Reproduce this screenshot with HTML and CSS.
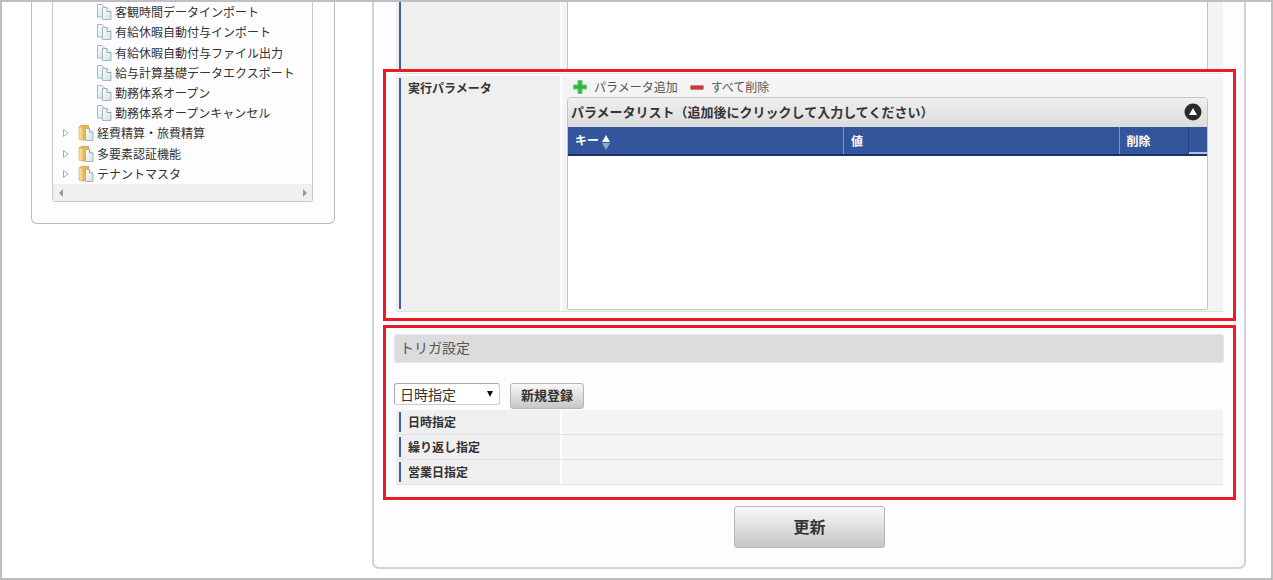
FILE: index.html
```html
<!DOCTYPE html>
<html lang="ja">

<head>
    <meta charset="UTF-8">
    <meta name="viewport" content="width=device-width, initial-scale=1.0">
    <title>ジョブネット設定</title>
    <link rel="stylesheet" href="styles.css">
</head>

<body>

    <!-- shared icons -->
    <svg class="defs" width="0" height="0" aria-hidden="true">
        <linearGradient id="paper" x1="0" y1="0" x2="1" y2="1">
            <stop offset="0" stop-color="#fff"/>
            <stop offset="1" stop-color="#cfe2e0"/>
        </linearGradient>
        <linearGradient id="cover" x1="0" y1="0" x2="1" y2="0">
            <stop offset="0" stop-color="#fbe7a8"/>
            <stop offset="1" stop-color="#eec26a"/>
        </linearGradient>
        <symbol id="pages" viewBox="0 0 16 16">
            <path d="M1.500 .5h4.500l3 3v9.500h-7.500z" fill="url(#paper)" stroke="#a3b8b6"/>
            <path d="M6.500 3.500h4.500l4 4v8h-8.500z" fill="url(#paper)" stroke="#a3b8b6"/>
            <path d="M11 3.500v4h4" fill="#fff" stroke="#8fa9a6"/>
        </symbol>
        <symbol id="folder" viewBox="0 0 16 16">
            <path d="M1.500 1.500l2-1h7v14h-5z" fill="#e7b95c" stroke="#d3a652"/>
            <path d="M1 1.500l4.500 1v13l-4.500-1.500z" fill="url(#cover)" stroke="#dcb260" stroke-width=".8"/>
            <path d="M7.500 3.500h4l3.500 3.500v8.500h-7.500z" fill="url(#paper)" stroke="#a3b8b6"/>
            <path d="M11.500 3.500v3.500h3.500" fill="#fff" stroke="#8fa9a6"/>
        </symbol>
        <symbol id="arrow" viewBox="0 0 6 8">
            <path d="M.5 .5l4.500 3.500-4.500 3.500z" fill="#fff" stroke="#aaa"/>
        </symbol>
    </svg>

    <nav class="sidebar">
        <div class="tree">
            <ul>
                <li class="leaf"><svg class="icon"><use href="#pages"/></svg><a href="#">客観時間データインポート</a></li>
                <li class="leaf"><svg class="icon"><use href="#pages"/></svg><a href="#">有給休暇自動付与インポート</a></li>
                <li class="leaf"><svg class="icon"><use href="#pages"/></svg><a href="#">有給休暇自動付与ファイル出力</a></li>
                <li class="leaf"><svg class="icon"><use href="#pages"/></svg><a href="#">給与計算基礎データエクスポート</a></li>
                <li class="leaf"><svg class="icon"><use href="#pages"/></svg><a href="#">勤務体系オープン</a></li>
                <li class="leaf"><svg class="icon"><use href="#pages"/></svg><a href="#">勤務体系オープンキャンセル</a></li>
                <li><svg class="arrow"><use href="#arrow"/></svg><svg class="icon"><use href="#folder"/></svg><a href="#">経費精算・旅費精算</a></li>
                <li><svg class="arrow"><use href="#arrow"/></svg><svg class="icon"><use href="#folder"/></svg><a href="#">多要素認証機能</a></li>
                <li><svg class="arrow"><use href="#arrow"/></svg><svg class="icon"><use href="#folder"/></svg><a href="#">テナントマスタ</a></li>
            </ul>
            <div class="scrollbar">
                <svg width="4" height="8"><path d="M4 0v8l-4-4z" fill="#999"/></svg>
                <svg width="4" height="8"><path d="M0 0v8l4-4z" fill="#999"/></svg>
            </div>
        </div>
    </nav>

    <main>

        <div class="previous">
            <div class="previous-label"></div>
            <div class="previous-value"><div class="previous-list"></div></div>
        </div>

        <section class="highlight params">
            <div class="continued">
                <table class="form">
                    <tr>
                        <th scope="row">実行パラメータ</th>
                        <td>
                            <div class="toolbar">
                                <button type="button">
                                    <svg width="14" height="14"><path d="M5 .5h4v4.500h4.500v4h-4.500v4.500h-4v-4.500h-4.500v-4h4.500z" fill="#2fb63d" stroke="#69cc70"/></svg>
                                    パラメータ追加
                                </button>
                                <button type="button">
                                    <svg width="14" height="14"><rect x=".5" y="5.500" width="13" height="4" rx="1" fill="#c43a40" stroke="#d5777b"/></svg>
                                    すべて削除
                                </button>
                            </div>
                            <div class="list">
                                <div class="list-title">
                                    <span>パラメータリスト（追加後にクリックして入力してください）</span>
                                    <button type="button" aria-label="折りたたむ">
                                        <svg width="18" height="18"><circle cx="9" cy="9" r="8.500" fill="#2a2a2a"/><path d="M9 5l4 7h-8z" fill="#fff"/></svg>
                                    </button>
                                </div>
                                <table class="grid">
                                    <thead>
                                        <tr>
                                            <th scope="col">キー<svg class="sort" width="8" height="15"><path d="M4 0l4 7h-8z" fill="#fff"/><path d="M4 15l4-7h-8z" fill="#94a6cf"/></svg></th>
                                            <th scope="col">値</th>
                                            <th scope="col" class="delete">削除</th>
                                            <td class="spare"></td>
                                        </tr>
                                    </thead>
                                </table>
                            </div>
                        </td>
                    </tr>
                </table>
            </div>
        </section>

        <section class="highlight trigger">
            <h2>トリガ設定</h2>
            <div class="controls">
                <span class="select">
                    <select aria-label="トリガ種別">
                        <option>日時指定</option>
                    </select>
                </span>
                <button type="button" class="button">新規登録</button>
            </div>
            <table class="form">
                <tr><th scope="row">日時指定</th><td></td></tr>
                <tr><th scope="row">繰り返し指定</th><td></td></tr>
                <tr><th scope="row">営業日指定</th><td></td></tr>
            </table>
        </section>

        <button type="submit" class="button update">更新</button>

    </main>

</body>
</html>
```
FILE: styles.css
```css
* {
    box-sizing: border-box;
}

body {
    display: flex;
    align-items: flex-start;
    min-height: 100vh;
    margin: 0;
    border: 2px solid #bfbfbf;
    background-color: #fff;
    color: #333;
    font-family: "Noto Sans CJK JP", sans-serif;
    font-size: 12px;
    line-height: 18px;
}

button, select {
    color: inherit;
    font-family: inherit;
}

svg {
    flex: none;
}

.defs {
    position: absolute;
}

/* left menu */

.sidebar {
    flex: none;
    width: 304px;
    margin-left: 29px;
    padding: 0 21px 21px 20px;
    border: 1px solid #bbb;
    border-top: 0;
    border-radius: 0 0 6px 6px;
    background-color: #fdfdff;
}

.tree {
    border: 1px solid #c8c8c8;
    border-width: 0 1px 1px 1px;
    border-radius: 0 0 3px 3px;
}

.tree ul {
    display: grid;
    grid-auto-rows: 1fr;
    height: 182px;
    margin: 0;
    padding: 0;
    list-style: none;
}

.tree li {
    display: flex;
    align-items: center;
    padding-left: 10px;
    white-space: nowrap;
}

.tree .leaf {
    padding-left: 43px;
}

.tree a {
    color: #333;
    line-height: 16px;
    text-decoration: none;
}

.icon {
    width: 16px;
    height: 16px;
    margin-right: 3px;
}

.arrow {
    width: 6px;
    height: 8px;
    margin-right: 9px;
}

.scrollbar {
    display: flex;
    align-items: center;
    justify-content: space-between;
    height: 17px;
    padding: 0 5px 0 6px;
    background-color: #f0f0f0;
}

/* right panel */

main {
    flex: 1;
    min-width: 0;
    margin: 0 25px 9px 37px;
    padding: 0 8px 19px 9px;
    border: 2px solid #d3d3d3;
    border-top: 0;
    border-radius: 0 0 7px 7px;
    background-color: #fdfdff;
}

.previous {
    display: flex;
    height: 67px;
    margin: 0 13px;
}

.previous-label {
    width: 164px;
    background: linear-gradient(#3d5da3, #3d5da3) 3px 0 / 2px 100% no-repeat #efefef;
}

.previous-value {
    flex: 1;
    padding: 0 15px 0 5px;
    border-left: 2px solid #fdfdff;
    background-color: #f4f4f4;
}

.previous-list {
    height: 100%;
    border: 1px solid #c4c4c4;
    border-width: 0 1px;
    background-color: #fff;
}

.highlight {
    padding: 8px 9px 8px 8px;
    border: 3px solid #ed1c24;
}

.params {
    margin-bottom: 4px;
    padding: 1px 10px 6px 10px;
}

.continued {
    padding-top: 2px;
    border-top: 1px solid #e4e4e4;
}

.form {
    width: 100%;
    border-collapse: collapse;
}

.form > tbody > tr > th {
    width: 164px;
    padding: 3px 0 3px 12px;
    background: linear-gradient(#3d5da3, #3d5da3) 3px 2px / 2px calc(100% - 4px) no-repeat #efefef;
    border-bottom: 1px solid #e2e2e4;
    text-align: left;
    vertical-align: top;
}

.form > tbody > tr > td {
    padding: 0 15px 1px 7px;
    border-bottom: 1px solid #e2e2e4;
    background: linear-gradient(#fdfdff, #fdfdff) 0 0 / 2px 100% no-repeat #f4f4f4;
}

.toolbar {
    display: flex;
    gap: 12px;
    height: 21px;
    padding-left: 6px;
}

.toolbar button {
    display: flex;
    align-items: center;
    gap: 7px;
    padding: 0;
    border: 0;
    background: none;
    color: #555;
    font-size: 12px;
}

.list {
    height: 213px;
    border: 1px solid #c4c4c4;
    border-radius: 4px 4px 2px 2px;
    background-color: #fff;
    overflow: hidden;
}

.list-title {
    display: flex;
    align-items: center;
    justify-content: space-between;
    height: 29px;
    padding: 0 5px 2px 3px;
    background: linear-gradient(#efefef, #dcdcdc);
    font-size: 13px;
    font-weight: bold;
}

.list-title button {
    display: flex;
    padding: 0;
    border: 0;
    background: none;
}

.grid {
    width: 100%;
    border-collapse: collapse;
    table-layout: fixed;
    background-color: #33559c;
    color: #fff;
}

.grid th {
    height: 28px;
    padding: 0 7px;
    border-right: 1px solid #8097c6;
    border-bottom: 2px solid #1c3266;
    text-align: left;
}

.grid .delete {
    width: 69px;
    border-right-color: #264380;
}

.grid .spare {
    width: 19px;
    padding: 0;
    border-bottom: 2px solid #1c3266;
    background: linear-gradient(#b4c0dc, #b4c0dc) 0 100% / 100% 2px no-repeat;
}

.sort {
    margin-left: 3px;
    vertical-align: middle;
}

/* trigger section */

h2 {
    margin: 0 0 20px;
    padding: 4px 5px 6px;
    border: 1px solid #e6e6e6;
    border-radius: 3px;
    background-color: #dcdcdc;
    color: #555;
    font-size: 14px;
    font-weight: normal;
    line-height: 17px;
}

.trigger {
    padding-top: 6px;
    padding-bottom: 12px;
}

.trigger .form {
    width: calc(100% - 3px);
    margin: 1px 1px 0 2px;
}

.controls {
    display: flex;
    align-items: flex-start;
    gap: 10px;
}

.select {
    position: relative;
}

.select::after {
    content: "";
    position: absolute;
    top: 8px;
    right: 7px;
    border: 3px solid transparent;
    border-top: 6px solid #111;
    border-bottom: 0;
    pointer-events: none;
}

select {
    display: block;
    width: 106px;
    height: 22px;
    padding: 0 5px;
    border: 1px solid #aaa;
    border-right-color: #ccc;
    border-bottom-color: #ccc;
    border-radius: 3px;
    background-color: #fff;
    font-size: 14px;
    line-height: 20px;
    appearance: none;
}

.button {
    height: 26px;
    padding: 0 10px 2px;
    border: 1px solid #b5b5b5;
    border-radius: 3px;
    background: linear-gradient(#f8f8f8, #c6c6c6);
    font-size: 13px;
    font-weight: bold;
    line-height: 20px;
}

.update {
    display: block;
    width: 151px;
    height: 42px;
    margin: 6px auto 0;
    font-size: 16px;
}
```
